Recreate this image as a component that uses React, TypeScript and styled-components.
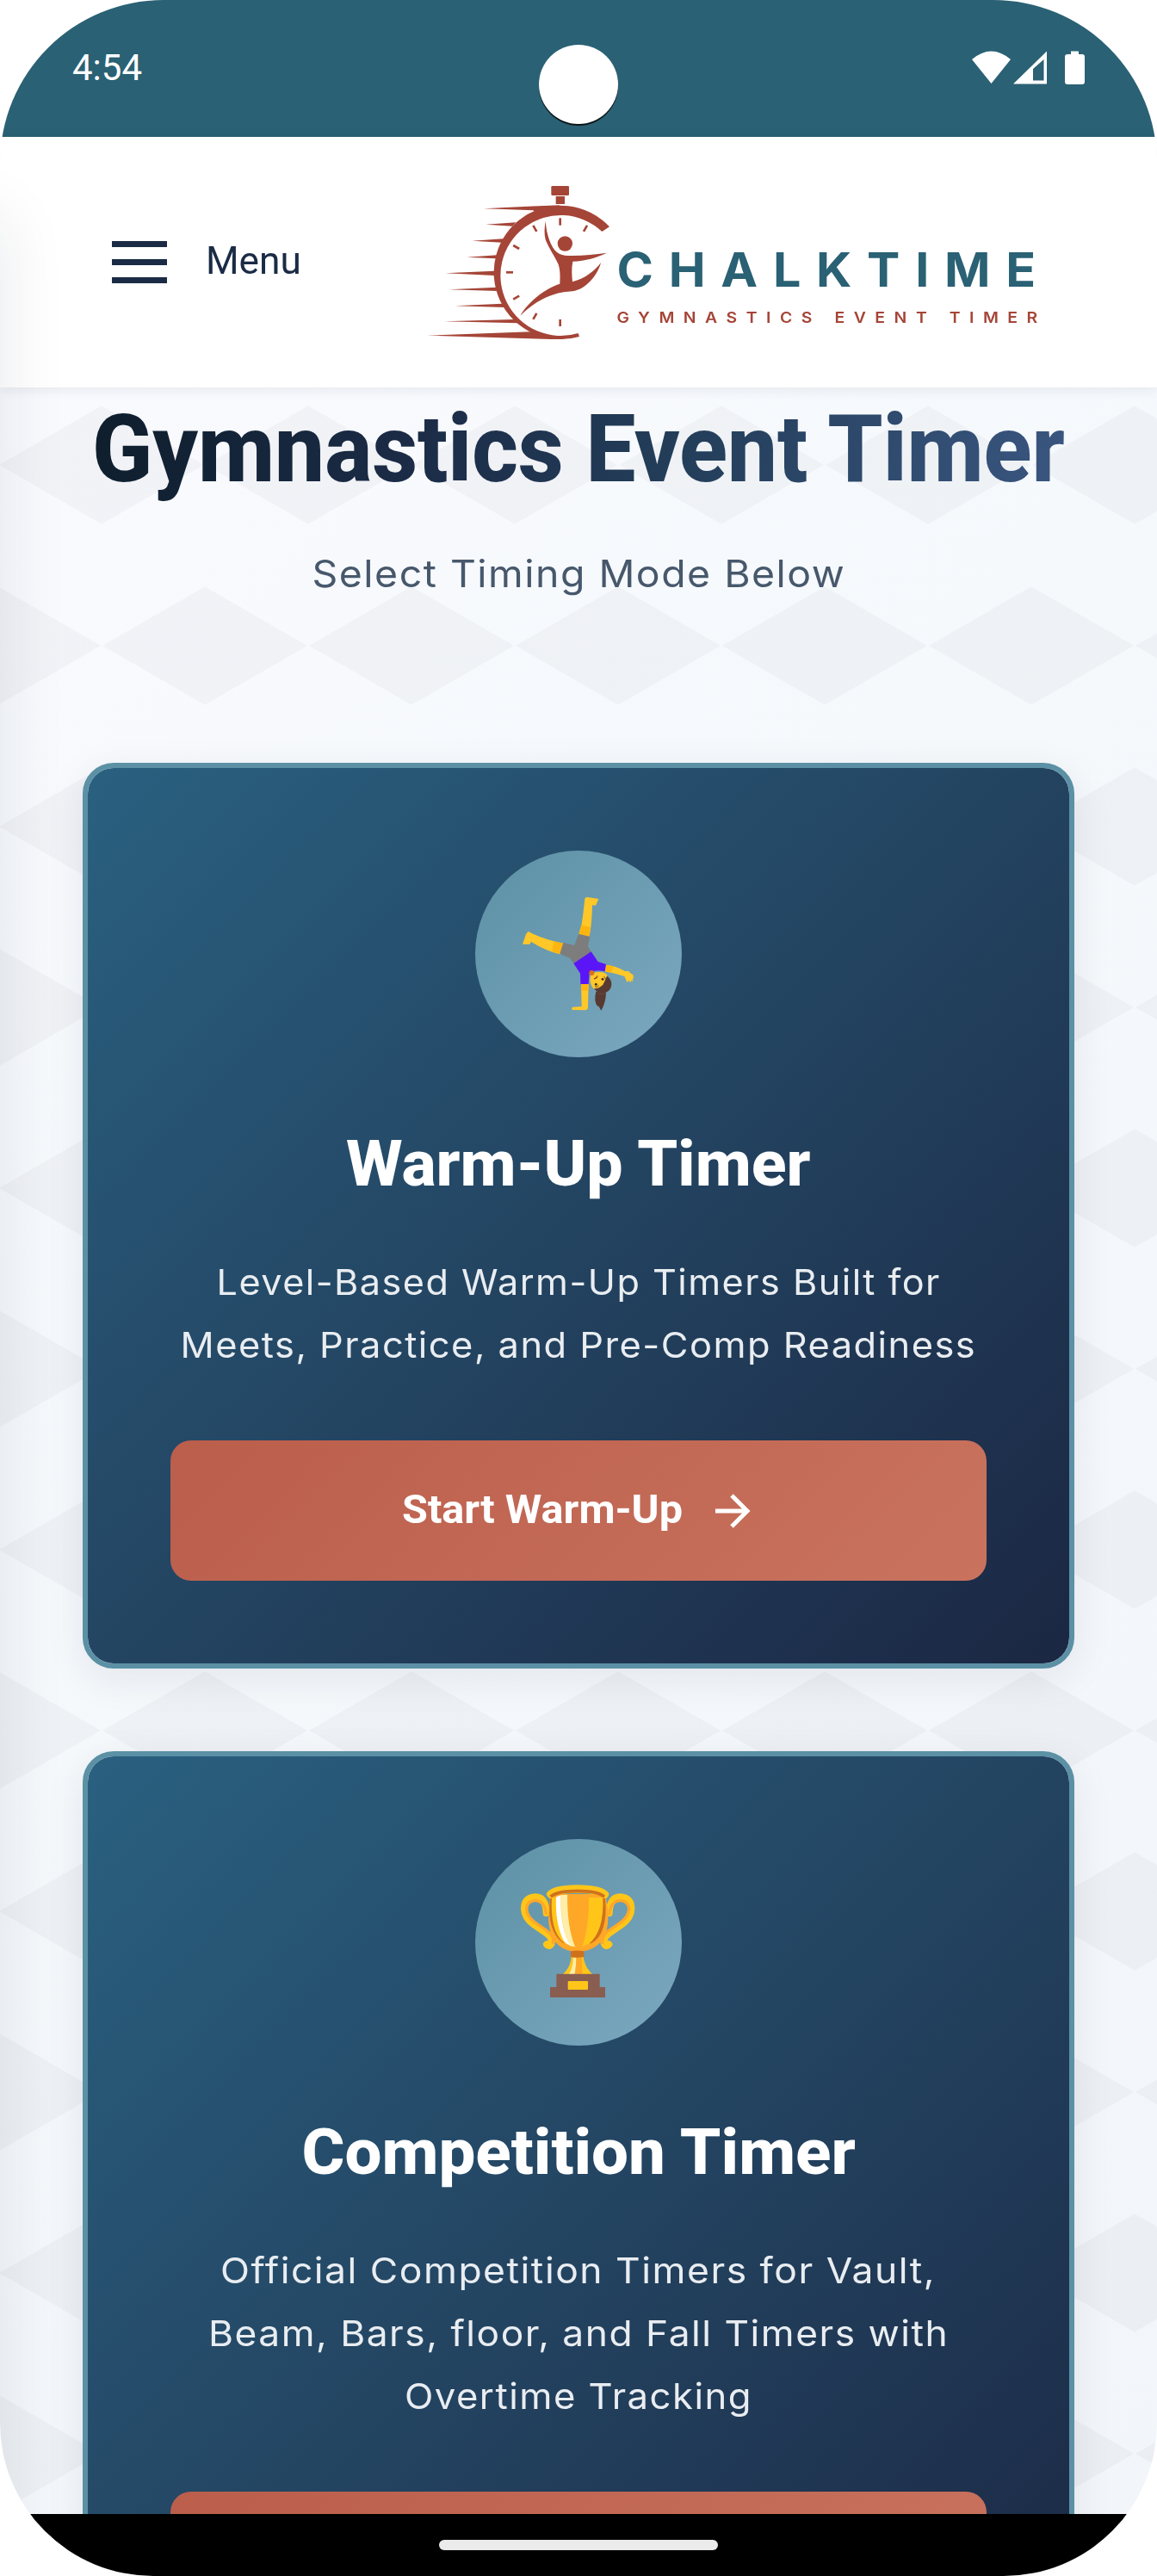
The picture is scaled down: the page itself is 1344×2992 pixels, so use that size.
import React, { useLayoutEffect, useRef, useState } from 'react';
import styled, { createGlobalStyle } from 'styled-components';

const display = `Roboto, "Noto Sans", sans-serif`;
const bodyFont = `Inter, "Noto Sans", sans-serif`;

const GlobalStyle = createGlobalStyle`
  * { box-sizing: border-box; }
  body { margin: 0; background: #fff; font-family: ${bodyFont}; }
`;

const Device = styled.div`
  position: relative;
  width: 1344px;
  height: 2992px;
  display: flex;
  flex-direction: column;
  overflow: hidden;
  border-radius: 190px 190px 178px 178px;
  background: #fff;
`;

const StatusBar = styled.div`
  position: relative;
  flex: none;
  height: 159px;
  display: flex;
  justify-content: space-between;
  align-items: flex-start;
  padding: 54px 80px 0 84px;
  background: #2a6174;
`;

const Clock = styled.div`
  font: 400 42px/50px ${display};
  color: #fff;
`;

const Camera = styled.div`
  position: absolute;
  left: 626px;
  top: 52px;
  width: 92px;
  height: 92px;
  border-radius: 50%;
  background: #fff;
  box-shadow: 0 2px 0 #0a1518;
`;

const Header = styled.header`
  position: relative;
  z-index: 1;
  flex: none;
  height: 291px;
  display: flex;
  align-items: center;
  padding-left: 130px;
  background: #fff;
  box-shadow: 0 2px 14px rgba(20, 32, 60, 0.09);
`;

const MenuButton = styled.div`
  width: 350px;
  display: flex;
  align-items: center;
  gap: 45px;
  color: #1b2b45;
`;

const Bars = styled.div`
  width: 64px;
  display: flex;
  flex-direction: column;
  gap: 14px;
`;

const Bar = styled.span`
  height: 7px;
  background: #1b2b45;
`;

const MenuLabel = styled.div`
  font: 450 45px/60px ${display};
  padding-bottom: 3px;
`;

const Logo = styled.div`
  display: flex;
  align-items: flex-start;
  gap: 7px;
`;

const Wordmark = styled.div`
  padding-top: 83px;
`;

const BrandName = styled.div`
  font: 700 55px/60px ${bodyFont};
  letter-spacing: 17px;
  color: #2a6174;
`;

const BrandTag = styled.div`
  margin-top: 14px;
  font: 600 17.5px/24px ${bodyFont};
  letter-spacing: 9.5px;
  color: #a54537;
`;

const Main = styled.main`
  flex: 1;
  min-height: 0;
  overflow: hidden;
  display: flex;
  flex-direction: column;
  align-items: center;
  padding: 12px 96px 0;
  --d: rgba(30, 22, 30, 0.03);
  background-image:
    linear-gradient(30deg, var(--d) 12.2%, transparent 12.4%, transparent 87.6%, var(--d) 87.8%),
    linear-gradient(150deg, var(--d) 12.2%, transparent 12.4%, transparent 87.6%, var(--d) 87.8%),
    linear-gradient(30deg, var(--d) 12.2%, transparent 12.4%, transparent 87.6%, var(--d) 87.8%),
    linear-gradient(150deg, var(--d) 12.2%, transparent 12.4%, transparent 87.6%, var(--d) 87.8%),
    linear-gradient(135deg, #f9fafe 0%, #f5f9fc 40%, #f2f5f9 100%);
  background-size: 240px 420px, 240px 420px, 240px 420px, 240px 420px, 100% 100%;
  background-position: -2px 300px, -2px 300px, 118px 90px, 118px 90px, 0 0;
`;

const Title = styled.h1`
  margin: 0;
  font: 800 109px/120px ${display};
  white-space: nowrap;
`;

const GradientText = styled.span`
  display: inline-block;
  background: linear-gradient(100deg, #0e1e2c 0%, #1b2b46 32%, #243f5b 62%, #3a5680 100%);
  -webkit-background-clip: text;
  background-clip: text;
  color: transparent;
`;

const Subtitle = styled.div`
  margin-top: 48px;
  font: 400 43.5px/72px ${bodyFont};
  letter-spacing: 1.4px;
  color: #47586c;
`;

const Cards = styled.div`
  margin-top: 184px;
  align-self: stretch;
  display: flex;
  flex-direction: column;
  gap: 96px;
`;

const Card = styled.section`
  flex: none;
  display: flex;
  flex-direction: column;
  align-items: center;
  padding: 96px;
  border: 6px solid #5b90a5;
  border-radius: 36px;
  background: linear-gradient(135deg, #2a6080 0%, #234461 50%, #1b2743 100%) padding-box;
  box-shadow: 0 12px 48px rgba(20, 25, 50, 0.08);
`;

const IconCircle = styled.div`
  width: 240px;
  height: 240px;
  border-radius: 50%;
  background: linear-gradient(135deg, #5d91a5, #7ba8c0);
`;

const CardTitle = styled.h2`
  margin: 78px 0 0;
  font: 800 75px/90px ${display};
  color: #fff;
`;

const Description = styled.div`
  margin: 57px 0 74px;
  display: flex;
  flex-direction: column;
  align-items: center;
  font: 400 41px/73px ${bodyFont};
  letter-spacing: 1.4px;
  color: #e9edf1;
`;

const StartButton = styled.div`
  align-self: stretch;
  height: 163px;
  display: flex;
  align-items: center;
  justify-content: center;
  gap: 36px;
  border-radius: 24px;
  background: linear-gradient(135deg, #bb5e4c, #c9735e);
  color: #fff;
  font: 700 46.5px/60px ${display};
`;

const ButtonLabel = styled.div`
  padding-bottom: 4px;
`;

const NavBar = styled.div`
  position: relative;
  z-index: 3;
  flex: none;
  height: 72px;
  display: flex;
  justify-content: center;
  align-items: center;
  background: #000;
`;

const HomePill = styled.div`
  width: 324px;
  height: 12px;
  border-radius: 6px;
  background: #ebebeb;
`;

const Drawer = styled.aside`
  position: absolute;
  z-index: 2;
  left: -900px;
  top: 250px;
  width: 900px;
  height: 2800px;
  box-shadow: 4px 0 72px rgba(20, 30, 60, 0.09);
  pointer-events: none;
`;

const FitBox = styled.span<{ $width: number }>`
  display: flex;
  justify-content: center;
  width: ${(p) => p.$width}px;
  white-space: nowrap;
`;

const FitInner = styled.span`
  flex: none;
`;

/* Condenses or widens one line of type to the measure it is set in. */
function FitLine({ width, children }: { width: number; children: React.ReactNode }) {
  const ref = useRef<HTMLSpanElement>(null);
  const [scale, setScale] = useState(1);
  useLayoutEffect(() => {
    if (ref.current) setScale(width / ref.current.offsetWidth);
  }, [width]);
  return (
    <FitBox $width={width}>
      <FitInner ref={ref} style={{ transform: `scaleX(${scale})` }}>{children}</FitInner>
    </FitBox>
  );
}

const StatusIcons = () => (
  <svg width="136" height="50" viewBox="1128 54 136 50" fill="#fff">
    <path d="M1129 69 Q1151.500 50 1174 69 L1151.500 97 Z" />
    <path fillRule="evenodd" d="M1177 97.500 L1216 59.500 V97.500 Z M1200 80 V93.500 H1212.500 V69 Z" />
    <path d="M1244 63 V59.500 H1253 V63 H1257 Q1260 63 1260 66 V95 Q1260 98 1257 98 H1240 Q1237 98 1237 95 V66 Q1237 63 1240 63 Z" />
  </svg>
);

const LogoMark = () => (
  <svg width="230" height="210" viewBox="0 0 690 630" fill="#a54537">
    <rect x="481" y="48" width="62" height="33" rx="4" />
    <rect x="497" y="84" width="31" height="27" />
    <path d="M684 190 A233 233 0 1 0 579 573 L575 561 A210 210 0 1 1 658 207 Z" />
    <path d="M246 127 L400 119 L512 115 L440 150 L418 133 Z" />
    <path d="M253 182 L358 175 L345 188 Z" />
    <path d="M206 239 L314 232 L308 245 Z" />
    <path d="M187 296 L292 289 L288 301 Z" />
    <path d="M113 352 L282 344 V360 Z" />
    <path d="M125 409 L290 401 L294 414 Z" />
    <path d="M146 466 L310 458 L320 471 Z" />
    <path d="M108 520 L350 513 L366 526 Z" />
    <path d="M48 569 L410 556 L530 582 H480 Z" />
    <rect x="508" y="160" width="8" height="25" />
    <rect x="508" y="513" width="8" height="24" />
    <rect x="324" y="345" width="24" height="8" />
    <rect x="-4" y="-12" width="8" height="24" transform="translate(424 196) rotate(-30)" />
    <rect x="-4" y="-12" width="8" height="24" transform="translate(600 196) rotate(30)" />
    <rect x="-4" y="-12" width="8" height="24" transform="translate(359 261) rotate(-60)" />
    <rect x="-4" y="-12" width="8" height="24" transform="translate(359 437) rotate(60)" />
    <rect x="-4" y="-12" width="8" height="24" transform="translate(424 502) rotate(30)" />
    <circle cx="529" cy="249" r="26" />
    <path d="M461 171 C465 220 480 262 502 280 C514 289 528 292 545 291 C590 292 632 286 675 281 C640 297 600 310 556 311 C551 335 553 360 555 382 C600 370 634 342 654 315 C645 355 602 409 555 415 C530 417 515 419 500 423 C450 437 410 464 373 500 C400 452 460 405 511 389 C512 365 513 345 506 322 C497 300 470 260 461 235 C456 215 457 195 461 171 Z" />
  </svg>
);

const Cartwheel = () => (
  <svg width="240" height="240" viewBox="36 54 720 720">
    <path fill="#ffc828" d="M418 222 Q419 216 426 216 L466 222 L456 245 L444 244 L443 270 Q440 330 433 354 L397 346 Q409 312 412 275 Z" />
    <path fill="#ffb50f" d="M406 313 L438 321 Q436 340 433 354 L397 346 Z" />
    <path fill="#ffc828" d="M221 335 L234 343 Q290 368 343 377 L331 415 Q280 402 230 371 L227 380 H201 L213 345 Z" />
    <path fill="#ffb50f" d="M311 370 L343 377 L331 415 L303 404 Z" />
    <path fill="#7d7d7d" d="M396 344 L435 353 L429 388 L441 407 L380 447 L367 430 L331 413 L343 375 L382 384 Z" />
    <path fill="#ffc828" d="M405 516 H431 L429 600 Q428 610 418 610 L375 609 Q369 604 376 599 L407 597 Z" />
    <path fill="#ffb50f" d="M405 516 H431 V542 H405 Z" />
    <path fill="#ffc828" d="M491 452 Q525 454 558 474 L570 474 L576 480 L588 488 L586 493 L590 499 L583 500 L587 510 L578 506 L580 514 L570 507 L566 514 L556 492 Q525 482 488 475 Z" />
    <path fill="#ffb50f" d="M491 452 L518 457 L510 479 L488 475 Z" />
    <path fill="#5b16f7" d="M440 406 L464 441 L492 450 L488 475 Q455 466 434 480 L431 519 H403 L402 482 L379 447 Z" />
    <path fill="#573a32" d="M457 545 Q448 578 463 598 L465 594 L475 611 Q492 582 492 545 Z" />
    <circle cx="479" cy="519" r="32" fill="#573a32" />
    <path fill="#ffc828" d="M438 490 Q446 476 470 477 Q492 478 496 489 Q488 508 482 520 Q470 536 448 535 Q432 515 438 490 Z" />
    <circle cx="442" cy="480" r="9" fill="#d4731c" />
    <circle cx="480" cy="502" r="4.500" fill="#46302c" />
    <circle cx="457" cy="520" r="4.500" fill="#46302c" />
    <path d="M450 501 Q460 499 462 490" fill="none" stroke="#8a3a1c" strokeWidth="3.500" />
    <path d="M484 493 Q491 496 490 502 M453 528 Q462 532 467 524" fill="none" stroke="#573a32" strokeWidth="2.500" />
    <path d="M462 550 Q478 558 493 547" fill="none" stroke="#6f4b40" strokeWidth="2.500" />
  </svg>
);

const Handle = () => (
  <>
    <path d="M284 306 Q282 251 246 250 Q207 252 207 292 Q208 322 240 346 L280 373 Q308 392 302 412 Q294 427 285 415" fill="none" stroke="#ffc619" strokeWidth="24" strokeLinecap="round" />
    <path d="M283 308 Q280 266 246 262 Q216 264 215 292 Q216 318 246 340 L288 369 Q312 388 307 410" fill="none" stroke="#ffa828" strokeWidth="10" strokeLinecap="round" />
  </>
);

const Trophy = () => (
  <svg width="240" height="240" viewBox="36 48 720 720">
    <Handle />
    <g transform="translate(787 0) scale(-1 1)"><Handle /></g>
    <path fill="#ffa828" d="M284 240 L297 256 Q286 330 297 366 Q312 436 392 442 Q476 436 494 366 Q505 325 492 256 L502 240 Z" />
    <path fill="#cf711c" d="M297 256 Q284 370 343 411 L440 412 Q500 380 489 254 Z" />
    <path fill="#ffc619" d="M303 252 Q296 370 345 409 L373 422 H408 L432 413 Q486 370 481 252 Z" />
    <path fill="#ffa828" d="M357 240 H432 Q434 360 408 424 H384 Q356 360 357 240 Z" />
    <path fill="#ffeeab" d="M334 244 L357 242 Q356 355 384 424 L366 420 Q334 360 334 244 Z" />
    <path fill="#fff" d="M318 250 L334 244 Q332 360 367 419 Q350 413 343 400 Q314 340 318 250 Z" />
    <path fill="#ffc619" d="M284 238 Q300 208 392 208 Q484 208 502 238 Q502 250 490 256 Q470 236 392 236 Q315 236 297 256 Q286 250 284 238 Z" />
    <path fill="none" stroke="#cf711c" strokeWidth="11" d="M299 249 Q320 229 392 229 Q464 229 486 249" />
    <path fill="#ffc619" d="M371 458 H413 Q418 495 445 520 H341 Q368 495 371 458 Z" />
    <path fill="#ffeeab" d="M378 462 H388 Q388 495 382 520 H362 Q378 495 378 462 Z" />
    <path fill="#ffa828" d="M388 460 H408 Q408 495 410 520 H383 Q388 495 388 460 Z" />
    <path fill="#cf711c" d="M369 439 Q392 434 415 439 V459 Q392 464 369 459 Z" />
    <path fill="#895d50" d="M319 518 H470 V564 H489 V600 H297 V564 H319 Z" />
    <rect x="359" y="543" width="70" height="30" rx="3" fill="#ffc619" />
  </svg>
);

const Arrow = () => (
  <svg width="48" height="48" viewBox="0 0 48 48" fill="none" stroke="#fff" strokeWidth="5">
    <path d="M2 24 H38 M21 6 L39 24 L21 42" />
  </svg>
);

type Line = { text: string; width: number };
type Mode = { title: Line; lines: Line[]; action?: Line; icon: React.ReactNode };

const modes: Mode[] = [
  {
    title: { text: 'Warm-Up Timer', width: 540 },
    lines: [
      { text: 'Level-Based Warm-Up Timers Built for', width: 841 },
      { text: 'Meets, Practice, and Pre-Comp Readiness', width: 925 },
    ],
    action: { text: 'Start Warm-Up', width: 326 },
    icon: <Cartwheel />,
  },
  {
    title: { text: 'Competition Timer', width: 643 },
    lines: [
      { text: 'Official Competition Timers for Vault,', width: 831 },
      { text: 'Beam, Bars, floor, and Fall Timers with', width: 860 },
      { text: 'Overtime Tracking', width: 404 },
    ],
    icon: <Trophy />,
  },
];

export default function App() {
  return (
    <>
      <GlobalStyle />
      <Device>
        <StatusBar>
          <Clock>4:54</Clock>
          <Camera />
          <StatusIcons />
        </StatusBar>
        <Header>
          <MenuButton>
            <Bars><Bar /><Bar /><Bar /></Bars>
            <MenuLabel><FitLine width={111}>Menu</FitLine></MenuLabel>
          </MenuButton>
          <Logo>
            <LogoMark />
            <Wordmark>
              <BrandName><FitLine width={504}>CHALKTIME</FitLine></BrandName>
              <BrandTag><FitLine width={499}>GYMNASTICS EVENT TIMER</FitLine></BrandTag>
            </Wordmark>
          </Logo>
        </Header>
        <Main>
          <Title><FitLine width={1130}><GradientText>Gymnastics Event Timer</GradientText></FitLine></Title>
          <Subtitle><FitLine width={620}>Select Timing Mode Below</FitLine></Subtitle>
          <Cards>
            {modes.map((m) => (
              <Card key={m.title.text}>
                <IconCircle>{m.icon}</IconCircle>
                <CardTitle><FitLine width={m.title.width}>{m.title.text}</FitLine></CardTitle>
                <Description>
                  {m.lines.map((l) => (
                    <FitLine key={l.text} width={l.width}>{l.text}</FitLine>
                  ))}
                </Description>
                <StartButton>
                  {m.action && (
                    <>
                      <ButtonLabel><FitLine width={m.action.width}>{m.action.text}</FitLine></ButtonLabel>
                      <Arrow />
                    </>
                  )}
                </StartButton>
              </Card>
            ))}
          </Cards>
        </Main>
        <Drawer />
        <NavBar><HomePill /></NavBar>
      </Device>
    </>
  );
}
